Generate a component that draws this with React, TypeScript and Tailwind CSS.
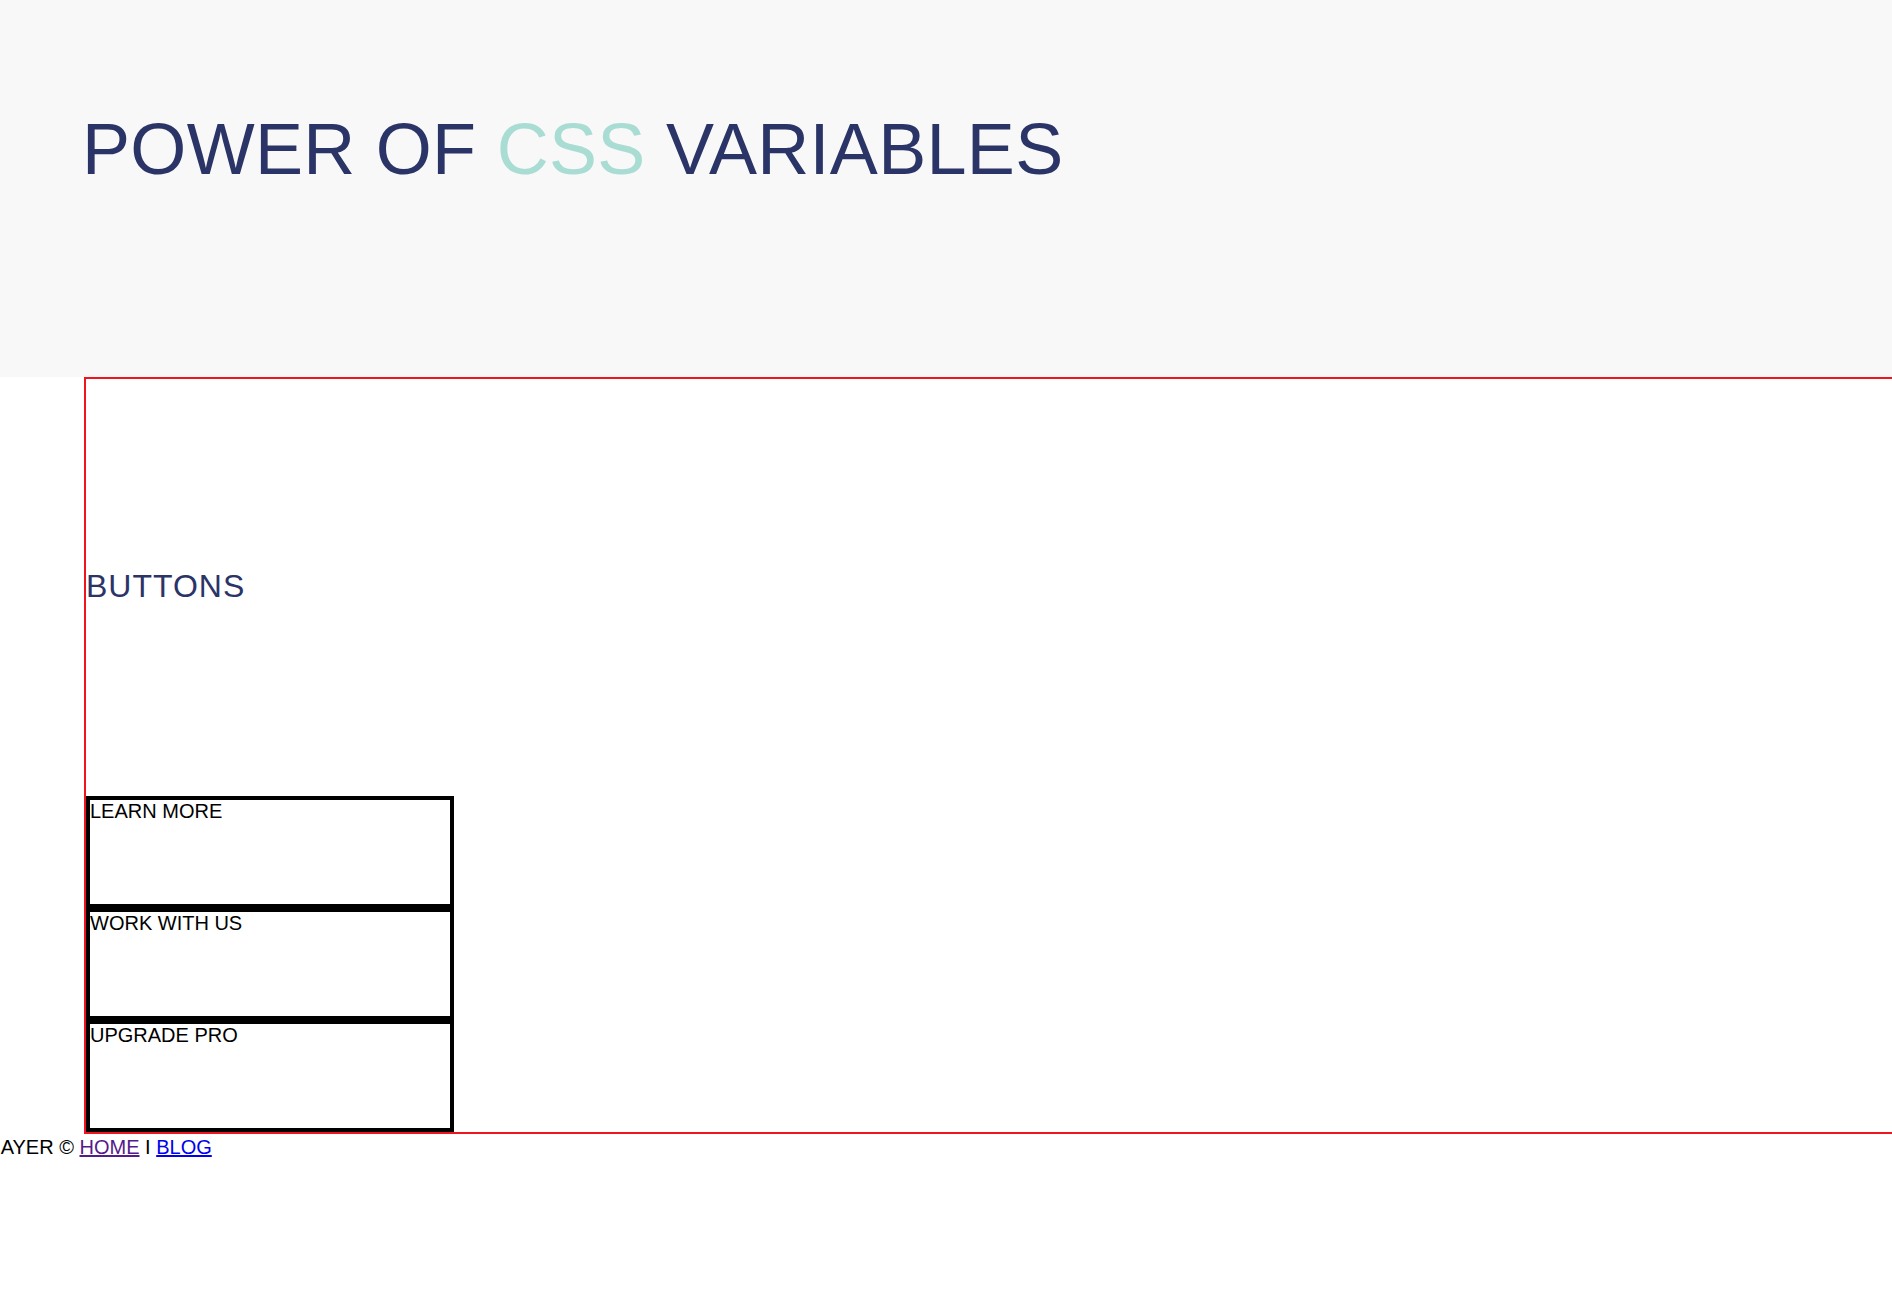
import React from 'react'

const buttons = ['LEARN MORE', 'WORK WITH US', 'UPGRADE PRO']

const App = () => {
  return (
    <div className="min-h-screen bg-white overflow-hidden font-['Liberation_Sans',Arial,sans-serif]">
      <header className="bg-[#f8f8f8] h-[377px] pt-[109px] pl-[82px]">
        <h1 className="text-[72px] leading-[80px] font-normal tracking-[0.3px] text-[#2b3467] whitespace-nowrap">
          POWER OF <span className="text-[#a9ddd4]">CSS</span> VARIABLES
        </h1>
      </header>

      <section className="ml-[84px] w-[calc(100%-60px)] border-2 border-[#f0141e]">
        <h2 className="text-[32px] leading-[37px] tracking-[1px] text-[#2b3467] mt-[189px] mb-[191px]">BUTTONS</h2>
        <div className="flex flex-col w-[368px]">
          {buttons.map((b) => (
            <button
              key={b}
              className="flex items-start h-[112px] border-4 border-black bg-white text-black text-[20px] leading-[23px] text-left"
            >
              {b}
            </button>
          ))}
        </div>
      </section>

      <footer className="text-[20px] leading-[23px] text-black mt-[2px] -ml-[16px] whitespace-nowrap">
        MAYER © <a href="#" className="text-[#551a8b] underline">HOME</a> I{' '}
        <a href="#" className="text-[#0000ee] underline">BLOG</a>
      </footer>
    </div>
  )
}

export default App
